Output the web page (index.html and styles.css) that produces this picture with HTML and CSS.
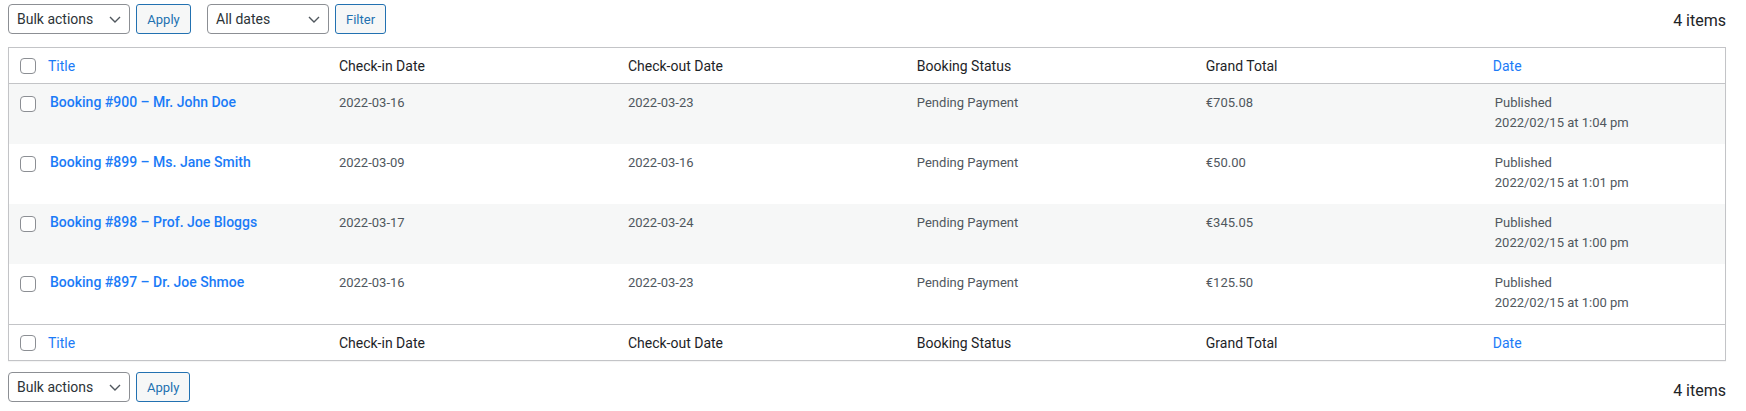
FILE: index.html
```html
<!DOCTYPE html>
<html lang="en">
<head>
<meta charset="utf-8">
<title>Bookings</title>
<link rel="stylesheet" href="styles.css">
</head>
<body>
<div class="wrap">
  <div class="tablenav tablenav-top">
    <div class="actions">
      <div class="select">
        <span>Bulk actions</span>
        <svg class="chev" width="12" height="7" viewBox="0 0 12 7"><polyline points="1,1 6,6 11,1" fill="none" stroke="#50575e" stroke-width="1.4"/></svg>
      </div>
      <button class="btn">Apply</button>
    </div>
    <div class="actions">
      <div class="select">
        <span>All dates</span>
        <svg class="chev" width="12" height="7" viewBox="0 0 12 7"><polyline points="1,1 6,6 11,1" fill="none" stroke="#50575e" stroke-width="1.4"/></svg>
      </div>
      <button class="btn">Filter</button>
    </div>
    <div class="count">4 items</div>
  </div>

  <table class="list">
    <thead>
      <tr>
        <th class="check-column"><input type="checkbox" class="cb"></th>
        <th class="sortable"><a href="#">Title</a></th>
        <th>Check-in Date</th>
        <th>Check-out Date</th>
        <th>Booking Status</th>
        <th>Grand Total</th>
        <th class="sortable col-date"><a href="#">Date</a></th>
      </tr>
    </thead>
    <tbody>
      <tr class="alt">
        <th class="check-column"><input type="checkbox" class="cb"></th>
        <td><a class="row-title" href="#">Booking #900 – Mr. John Doe</a></td>
        <td>2022-03-16</td>
        <td>2022-03-23</td>
        <td>Pending Payment</td>
        <td>€705.08</td>
        <td>Published<br>2022/02/15 at 1:04 pm</td>
      </tr>
      <tr>
        <th class="check-column"><input type="checkbox" class="cb"></th>
        <td><a class="row-title" href="#">Booking #899 – Ms. Jane Smith</a></td>
        <td>2022-03-09</td>
        <td>2022-03-16</td>
        <td>Pending Payment</td>
        <td>€50.00</td>
        <td>Published<br>2022/02/15 at 1:01 pm</td>
      </tr>
      <tr class="alt">
        <th class="check-column"><input type="checkbox" class="cb"></th>
        <td><a class="row-title" href="#">Booking #898 – Prof. Joe Bloggs</a></td>
        <td>2022-03-17</td>
        <td>2022-03-24</td>
        <td>Pending Payment</td>
        <td>€345.05</td>
        <td>Published<br>2022/02/15 at 1:00 pm</td>
      </tr>
      <tr>
        <th class="check-column"><input type="checkbox" class="cb"></th>
        <td><a class="row-title" href="#">Booking #897 – Dr. Joe Shmoe</a></td>
        <td>2022-03-16</td>
        <td>2022-03-23</td>
        <td>Pending Payment</td>
        <td>€125.50</td>
        <td>Published<br>2022/02/15 at 1:00 pm</td>
      </tr>
    </tbody>
    <tfoot>
      <tr>
        <th class="check-column"><input type="checkbox" class="cb"></th>
        <th class="sortable"><a href="#">Title</a></th>
        <th>Check-in Date</th>
        <th>Check-out Date</th>
        <th>Booking Status</th>
        <th>Grand Total</th>
        <th class="sortable"><a href="#">Date</a></th>
      </tr>
    </tfoot>
  </table>

  <div class="tablenav tablenav-bottom">
    <div class="actions">
      <div class="select">
        <span>Bulk actions</span>
        <svg class="chev" width="12" height="7" viewBox="0 0 12 7"><polyline points="1,1 6,6 11,1" fill="none" stroke="#50575e" stroke-width="1.4"/></svg>
      </div>
      <button class="btn">Apply</button>
    </div>
    <div class="count">4 items</div>
  </div>
</div>
</body>
</html>
```

FILE: styles.css
```css
* { box-sizing: border-box; }

html, body {
  margin: 0;
  padding: 0;
  background: #ffffff;
}

body {
  font-family: Roboto, "Noto Sans", "Liberation Sans", sans-serif;
  color: #3c434a;
  font-size: 13px;
}

.wrap {
  padding: 4px 20px 0 8px;
}

.tablenav {
  display: flex;
  align-items: center;
  height: 30px;
}

.tablenav-top { margin-bottom: 13px; }
.tablenav-bottom { margin-top: 11px; }

.actions {
  display: flex;
  align-items: center;
  gap: 6px;
  margin-right: 16px;
}

.select {
  display: flex;
  align-items: center;
  justify-content: space-between;
  width: 122px;
  height: 30px;
  padding: 0 8px 0 8px;
  border: 1px solid #8c8f94;
  border-radius: 4px;
  background: #ffffff;
  color: #2c3338;
  font-size: 14px;
}

.chev { display: block; margin-top: 1px; }

.btn {
  height: 30px;
  padding: 0 10px;
  min-width: 50px;
  border: 1px solid #2271b1;
  border-radius: 3px;
  background: #f6f7f7;
  color: #2271b1;
  font-family: inherit;
  font-size: 13px;
}

.tablenav-top .actions:first-child .btn { width: 55px; }

.count {
  margin-left: auto;
  font-size: 16px;
  color: #1d2327;
  padding-top: 2px;
}

.tablenav-bottom .count { padding-top: 6px; }

.list {
  width: 100%;
  table-layout: fixed;
  border-collapse: separate;
  border-spacing: 0;
  border: 1px solid #c3c4c7;
  box-shadow: 0 1px 1px rgba(0, 0, 0, 0.04);
}

.list th,
.list td {
  text-align: left;
  font-weight: 400;
}

.list thead th,
.list tfoot th {
  height: 36px;
  padding: 1px 10px 0;
  font-size: 14px;
  line-height: 19px;
  color: #1d2327;
  vertical-align: middle;
}

.list thead th { border-bottom: 1px solid #c3c4c7; }
.list tfoot th { border-top: 1px solid #c3c4c7; }

.list th.sortable { padding-left: 8px; }

.list th.sortable a {
  color: #1b7bf7;
  text-decoration: none;
}

.list th.check-column {
  width: 31px;
  padding: 0 0 0 11px;
}

.list th.col-date { width: 14%; }

.list tbody tr { height: 60px; }
.list tbody tr.alt { background: #f6f7f7; }

.list tbody td {
  padding: 9px 10px 7px;
  vertical-align: top;
  font-size: 13px;
  line-height: 19.5px;
  color: #50575e;
}

.list tbody th.check-column {
  vertical-align: top;
  padding-top: 12px;
}

.row-title {
  font-size: 14px;
  font-weight: 500;
  color: #1b7bf7;
  text-decoration: none;
}

.cb {
  appearance: none;
  -webkit-appearance: none;
  display: block;
  width: 16px;
  height: 16px;
  margin: 0;
  border: 1px solid #8c8f94;
  border-radius: 4px;
  background: #ffffff;
}
```
